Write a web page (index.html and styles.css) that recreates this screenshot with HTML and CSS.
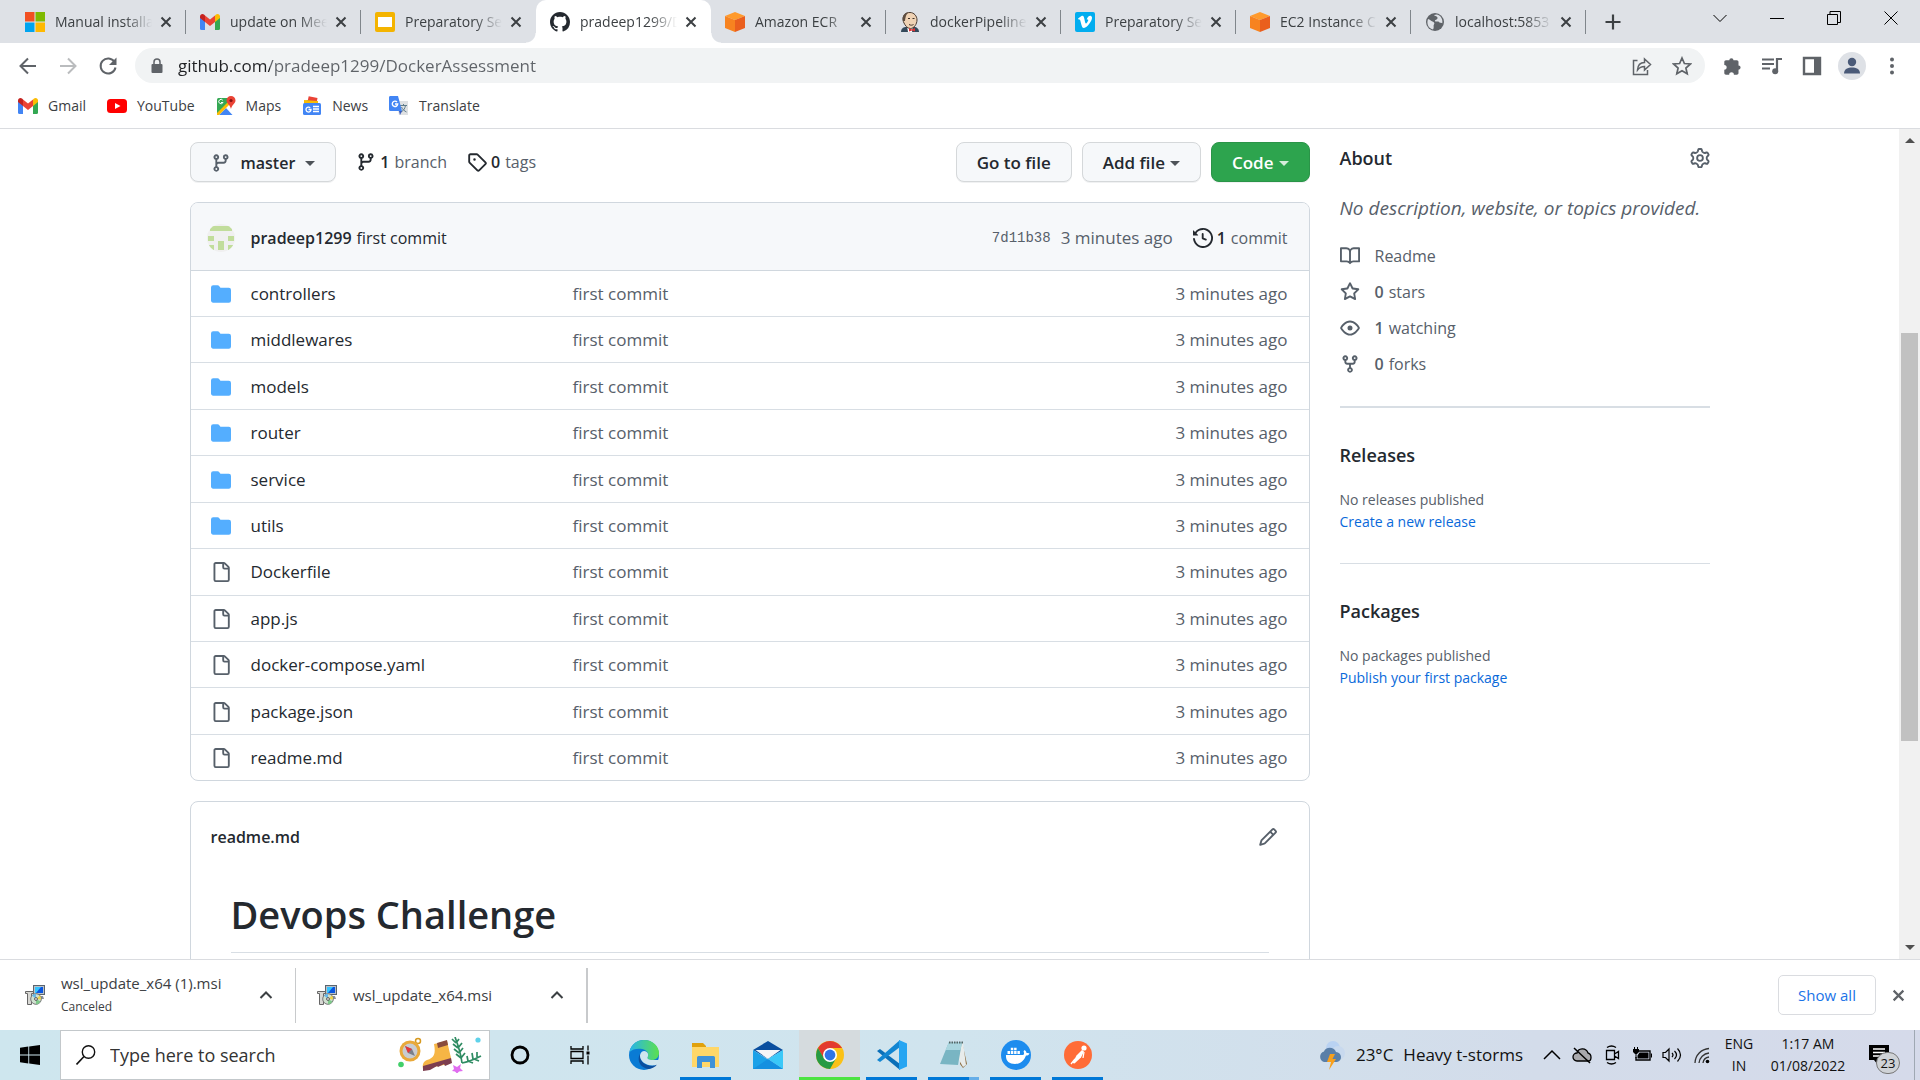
FILE: index.html
```html
<!DOCTYPE html>
<html lang="en">
<head>
<meta charset="utf-8">
<title>pradeep1299/DockerAssessment</title>
<link rel="stylesheet" href="styles.css">
</head>
<body>
<svg class="sprite" aria-hidden="true">
  <symbol id="close" viewBox="0 0 12 12"><path d="M1.5 1.5l9 9M10.5 1.5l-9 9" fill="none" stroke="currentColor" stroke-width="2"/></symbol>
  <symbol id="chev-up" viewBox="0 0 14 14"><path d="M1.500 10L7 4.500 12.500 10" fill="none" stroke="currentColor" stroke-width="2"/></symbol>
  <symbol id="gmail" viewBox="0 0 20 16"><path d="M0 2v12.500A1.500 1.500 0 001.500 16H5V6z" fill="#4285f4"/><path d="M15 6v10h3.500a1.500 1.500 0 001.500-1.500V2z" fill="#34a853"/><path d="M15 1.500V8l5-4V2.400C20 .4 17.600-.7 16 .6z" fill="#fbbc04"/><path d="M5 8V1.500l5 4 5-4V8l-5 4z" fill="#ea4335"/><path d="M0 2.400V4l5 4V1.500L4 .6C2.400-.7 0 .4 0 2.400z" fill="#c5221f"/></symbol>
  <symbol id="aws" viewBox="0 0 20 20"><path d="M10 0l10 4-10 4L0 4z" fill="#ff9a2c"/><path d="M0 4l10 4v12L0 16z" fill="#f78320"/><path d="M20 4L10 8v12l10-4z" fill="#ea5f1e"/></symbol>
  <symbol id="branch" viewBox="0 0 16 16"><path fill="currentColor" fill-rule="evenodd" d="M11.750 2.500a.75.75 0 100 1.500.75.75 0 000-1.500zm-2.250.75a2.250 2.250 0 113 2.122V6A2.500 2.500 0 0110 8.500H6a1 1 0 00-1 1v1.128a2.251 2.251 0 11-1.500 0V5.372a2.250 2.250 0 111.500 0v1.836A2.492 2.492 0 016 7h4a1 1 0 001-1v-.628A2.250 2.250 0 019.500 3.250zM4.250 12a.75.75 0 100 1.500.75.75 0 000-1.500zM3.500 3.250a.75.75 0 111.500 0 .75.75 0 01-1.500 0z"/></symbol>
  <symbol id="folder" viewBox="0 0 16 16"><path fill="currentColor" d="M1.750 1A1.750 1.750 0 000 2.750v10.500C0 14.216.784 15 1.750 15h12.500A1.750 1.750 0 0016 13.250v-8.500A1.750 1.750 0 0014.250 3h-6.500a.25.25 0 01-.2-.1l-.9-1.200c-.33-.44-.85-.7-1.400-.7h-3.500z"/></symbol>
  <symbol id="file" viewBox="0 0 16 16"><path fill="currentColor" fill-rule="evenodd" d="M2 1.750C2 .784 2.784 0 3.750 0h6.586c.464 0 .909.184 1.237.513l2.914 2.914c.329.328.513.773.513 1.237v9.586A1.750 1.750 0 0113.250 16h-9.500A1.750 1.750 0 012 14.250V1.750zm1.750-.25a.25.25 0 00-.25.25v12.500c0 .138.112.25.25.25h9.500a.25.25 0 00.25-.25V6h-2.750A1.750 1.750 0 019 4.250V1.500H3.750zm6.750.062V4.250c0 .138.112.25.25.25h2.688a.252.252 0 00-.011-.013l-2.914-2.914a.272.272 0 00-.013-.011z"/></symbol>
  <symbol id="msi" viewBox="0 0 20 20"><rect x="8.500" y=".5" width="11" height="9" fill="#b9c0c8" stroke="#5a646e"/><rect x="10" y="2" width="8" height="6" fill="#0a56e0"/><path d="M10 2h6l-5 6h-1z" fill="#35c4ff"/><path d="M7 11h11l1 3H7z" fill="#8b929b"/><path d="M.5 6.500h8v2h-2v11h-4v-11h-2z" fill="#d8d8d4" stroke="#666"/><circle cx="11" cy="14" r="5.300" fill="#cfe0cf" stroke="#777"/><path d="M11 14L7 10.500a5 5 0 014-1.700z" fill="#68b8e8"/><path d="M11 14l4.500 2.500a5 5 0 01-4.500 2.700z" fill="#7ec98a"/><path d="M11 14l4-3.500a5 5 0 011 4z" fill="#ecd34a"/><circle cx="11" cy="14" r="1.400" fill="#fff" stroke="#555"/></symbol>
</svg>

<header class="chrome">
  <div class="tabstrip">
    <div class="tab"><a href="#"><svg class="fav" viewBox="0 0 20 20"><path fill="#f25022" d="M0 0h9.500v9.500H0z"/><path fill="#7fba00" d="M10.500 0H20v9.500h-9.500z"/><path fill="#00a4ef" d="M0 10.500h9.500V20H0z"/><path fill="#ffb900" d="M10.500 10.500H20V20h-9.500z"/></svg><span>Manual installa</span></a><button aria-label="Close tab"><svg><use href="#close"/></svg></button></div>
    <div class="tab"><a href="#"><svg class="fav" viewBox="0 -2 20 20"><use href="#gmail" width="20" height="16"/></svg><span>update on Mee</span></a><button aria-label="Close tab"><svg><use href="#close"/></svg></button></div>
    <div class="tab plain"><a href="#"><svg class="fav" viewBox="0 0 20 20"><rect width="20" height="20" rx="2" fill="#f4b400"/><path fill="#fff" d="M3 5h14v10H3z"/></svg><span>Preparatory Se</span></a><button aria-label="Close tab"><svg><use href="#close"/></svg></button></div>
    <div class="tab active"><a href="#"><svg class="fav" viewBox="0 0 16 16"><path fill="#24292f" d="M8 0C3.580 0 0 3.580 0 8c0 3.540 2.290 6.530 5.470 7.590.4.070.55-.17.55-.38 0-.19-.01-.82-.01-1.490-2.010.37-2.530-.49-2.690-.94-.09-.23-.48-.94-.82-1.130-.28-.15-.68-.52-.01-.53.63-.01 1.080.58 1.230.82.72 1.210 1.870.87 2.330.66.070-.52.28-.87.51-1.070-1.780-.2-3.640-.89-3.640-3.950 0-.87.31-1.590.82-2.150-.08-.2-.36-1.020.08-2.120 0 0 .67-.21 2.200.82.64-.18 1.320-.27 2-.27s1.360.09 2 .27c1.530-1.040 2.200-.82 2.200-.82.44 1.100.16 1.920.08 2.120.51.56.82 1.270.82 2.150 0 3.070-1.870 3.750-3.650 3.950.29.25.54.73.54 1.480 0 1.070-.01 1.930-.01 2.200 0 .21.15.46.55.38A8.010 8.010 0 0016 8c0-4.420-3.580-8-8-8z"/></svg><span>pradeep1299/D</span></a><button aria-label="Close tab"><svg><use href="#close"/></svg></button></div>
    <div class="tab"><a href="#"><svg class="fav"><use href="#aws"/></svg><span>Amazon ECR</span></a><button aria-label="Close tab"><svg><use href="#close"/></svg></button></div>
    <div class="tab"><a href="#"><svg class="fav" viewBox="0 0 20 20"><path d="M1 20c0-4 3-5 5-5h8c3 0 5 2 5 5z" fill="#34495a"/><path d="M7 14h6l-1 6H8z" fill="#fff"/><path d="M3 7C3 3 6 .5 10 .5S17 4 17 8s-3 8.500-6.500 8.500S5 13 4 11s-1-3-1-4z" fill="#efd2b4" stroke="#4b3b30"/><path d="M3 9C1.500 3 6 0 9 .3 6 2 5.500 5 5 9z" fill="#5d4d40"/><path d="M8 6.500h2M12.500 6.500h2M9 12.500c2 1 3 .8 4.500 0" stroke="#3d3028" fill="none"/><path d="M9 16l3 1.500 3-1.500v3.500l-3-1-3 1z" fill="#d33"/></svg><span>dockerPipeline</span></a><button aria-label="Close tab"><svg><use href="#close"/></svg></button></div>
    <div class="tab"><a href="#"><svg class="fav" viewBox="0 0 20 20"><rect width="20" height="20" rx="2" fill="#02adef"/><path d="M3 6.500L6.500 4c2-.8 2.500 1 3 3.500.5 2.800.9 4 1.500 4s1.700-1.700 2.100-2.700c.4-1.200-.3-1.700-1.400-1.200C12.500 4.500 14.500 3.300 16 4c2 1 .8 4.300-1.200 7.100C12.500 14.400 10.500 16 9 16c-2 0-2.300-2-3.200-5.500C5.300 8.300 5 7 3.900 7.700z" fill="#fff"/></svg><span>Preparatory Se</span></a><button aria-label="Close tab"><svg><use href="#close"/></svg></button></div>
    <div class="tab"><a href="#"><svg class="fav"><use href="#aws"/></svg><span>EC2 Instance C</span></a><button aria-label="Close tab"><svg><use href="#close"/></svg></button></div>
    <div class="tab"><a href="#"><svg class="fav" viewBox="0 0 20 20"><circle cx="10" cy="10" r="9" fill="#5f6368"/><path d="M3 7c2 .5 3 2 4.500 2.500S10 11 9 12.500 9.500 15 8 17.500C4 16.500 2 13 2.500 9zM9 3c1 1.500 3.500 1 3.500 3S9.500 7.500 10 9s3-.5 4 1 3 .5 3.300 1.300C18 7 15.500 3 11.500 2.600z" fill="#dee1e6"/></svg><span>localhost:5853</span></a><button aria-label="Close tab"><svg><use href="#close"/></svg></button></div>
    <button class="newtab" aria-label="New tab"><svg viewBox="0 0 16 16"><path d="M8 .5v15M.5 8h15" stroke="currentColor" stroke-width="2.200"/></svg></button>
    <div class="winbtns">
      <button aria-label="Search tabs"><svg viewBox="0 0 16 16"><path d="M1.500 5L8 11.500 14.500 5" fill="none" stroke="currentColor"/></svg></button>
      <button aria-label="Minimize"><svg viewBox="0 0 16 16"><path d="M1 8.500h14" stroke="currentColor"/></svg></button>
      <button aria-label="Restore"><svg viewBox="0 0 16 16"><path d="M1.500 4.500h10v10h-10zM4 4V1.500h10.500v11H12" fill="none" stroke="currentColor"/></svg></button>
      <button aria-label="Close"><svg viewBox="0 0 16 16"><path d="M1.500 1.500l13 13M14.500 1.500l-13 13" stroke="currentColor"/></svg></button>
    </div>
  </div>

  <div class="toolbar">
    <button aria-label="Back"><svg viewBox="0 0 20 20"><path d="M18 10H3M10 2.500L2.500 10l7.500 7.500" fill="none" stroke="currentColor" stroke-width="2"/></svg></button>
    <button class="dim" aria-label="Forward"><svg viewBox="0 0 20 20"><path d="M2 10h15M10 2.500l7.500 7.500-7.500 7.500" fill="none" stroke="currentColor" stroke-width="2"/></svg></button>
    <button aria-label="Reload"><svg viewBox="0 0 20 20"><path d="M16.500 6A7.500 7.500 0 1017.500 11.500" fill="none" stroke="currentColor" stroke-width="2"/><path d="M18.500 1.500V9H11z" fill="currentColor"/></svg></button>
    <div class="omnibox">
      <svg class="lock" viewBox="0 0 12 16"><path d="M3 6V4a3 3 0 016 0v2" fill="none" stroke="currentColor" stroke-width="1.500"/><rect x=".5" y="6" width="11" height="9" rx="1" fill="currentColor"/></svg>
      <input type="text" aria-label="Address" value="github.com/pradeep1299/DockerAssessment">
      <button aria-label="Share"><svg viewBox="0 0 20 20"><path d="M5.500 4.500H1.500v14h14V14M5.500 14c.3-5 3-7.500 7-7.500V3l6 5.500-6 5.500v-3.500c-3 0-5 .8-7 3.500z" fill="none" stroke="currentColor" stroke-width="1.500"/></svg></button>
      <button aria-label="Bookmark"><svg viewBox="0 0 20 20"><path d="M10 2l2.400 5.500 6 .5-4.500 4 1.300 5.800L10 14.700l-5.200 3.100L6.100 12 1.600 8l6-.5z" fill="none" stroke="currentColor" stroke-width="1.700"/></svg></button>
    </div>
    <button aria-label="Extensions"><svg viewBox="0 0 20 20"><path fill="currentColor" d="M16.500 9.500V6c0-1-.7-1.700-1.700-1.700h-3.300a2.100 2.100 0 10-4.200 0H4C3 4.300 2.300 5 2.300 6v3c3.200 0 3.200 4.700 0 4.700V17c0 1 .7 1.700 1.700 1.700h3.200c0-3.200 4.700-3.200 4.700 0h2.900c1 0 1.700-.7 1.700-1.700v-3.300a2.100 2.100 0 100-4.200z"/></svg></button>
    <button aria-label="Media"><svg viewBox="0 0 20 20"><path d="M0 3.500h12M0 8h12M0 12.500h8" stroke="currentColor" stroke-width="2"/><path d="M15 15V3h5" fill="none" stroke="currentColor" stroke-width="2.200"/><circle cx="13.200" cy="15.300" r="3" fill="currentColor"/></svg></button>
    <button aria-label="Side panel"><svg viewBox="0 0 20 20"><path d="M2 2h16v16H2z" fill="none" stroke="currentColor" stroke-width="2.400"/><path d="M12 2h6v16h-6z" fill="currentColor"/></svg></button>
    <button class="avatar" aria-label="Profile"><svg viewBox="0 0 28 28"><circle cx="14" cy="14" r="14" fill="#dee1e6"/><circle cx="14" cy="10" r="4.200" fill="#4a5a78"/><path d="M6 21.500c0-4.500 4-6 8-6s8 1.500 8 6z" fill="#4a5a78"/></svg></button>
    <button aria-label="Menu"><svg viewBox="0 0 20 20"><g fill="currentColor"><circle cx="10" cy="3.500" r="2"/><circle cx="10" cy="10" r="2"/><circle cx="10" cy="16.500" r="2"/></g></svg></button>
  </div>

  <nav class="bookmarks">
    <a href="#"><svg viewBox="0 -2 20 20"><use href="#gmail" width="20" height="16"/></svg>Gmail</a>
    <a href="#"><svg viewBox="0 0 20 20"><rect y="3" width="20" height="14" rx="3.500" fill="red"/><path d="M8 7l5.500 3L8 13z" fill="#fff"/></svg>YouTube</a>
    <a href="#"><svg viewBox="0 0 20 20"><rect x="1" y="2" width="16" height="17" rx="1.500" fill="#34a853"/><path d="M1 19L14 6l3 3v10z" fill="#fff"/><path d="M3 19l7-7 6.500 7z" fill="#4285f4"/><path d="M1 17L14 4l2 2L3 19H1z" fill="#fbbc04"/><path d="M15 0a4.500 4.500 0 014.500 4.500c0 3-3.500 4-4.500 8.500-1-4.500-4.500-5.500-4.500-8.500A4.500 4.500 0 0115 0z" fill="#ea4335"/><circle cx="15" cy="4.500" r="1.600" fill="#811"/><path d="M6.800 4.300A2.200 2.200 0 107 6.500H5" fill="none" stroke="#fff"/></svg>Maps</a>
    <a href="#"><svg viewBox="0 0 20 20"><path d="M3 5l10-3 4 8H3z" fill="#34a853"/><path d="M6 1h9v6H6z" fill="#ea4335" transform="rotate(12 10 4)"/><path d="M2 4l14 1v6H2z" fill="#fbbc04"/><rect x="1" y="7" width="18" height="12" rx="1.500" fill="#4285f4"/><path d="M11 10.500h6M11 13h6M11 15.500h6M8.200 11.700A2.500 2.500 0 109 13.500H6.500" fill="none" stroke="#fff" stroke-width="1.300"/></svg>News</a>
    <a href="#"><svg viewBox="0 0 20 20"><path d="M7 5h12v14H10z" fill="#dfe1e3"/><path d="M11 9.500h7M14.500 8v1.500M12 16c3-1.500 4-4 4.500-6.500M12.500 11c1 2.500 3 4 5 5" fill="none" stroke="#607d8b"/><path d="M1 0h8l4 15H1.500A1.500 1.500 0 010 13.500V1.500A1.500 1.500 0 011 0z" fill="#4285f4"/><path d="M10 15h3l-2 4z" fill="#3a5bbc"/><path d="M8 6A2.700 2.700 0 108.700 8H6" fill="none" stroke="#fff" stroke-width="1.400"/></svg>Translate</a>
  </nav>
</header>

<div class="viewport">
  <div class="page">
    <main class="repo">
      <div class="actions">
        <button class="btn branch-btn"><svg class="ico"><use href="#branch"/></svg>master<i class="caret"></i></button>
        <a class="count" href="#"><svg class="ico"><use href="#branch"/></svg><b>1</b> branch</a>
        <a class="count" href="#"><svg class="ico" viewBox="0 0 16 16"><path fill="currentColor" fill-rule="evenodd" d="M2.500 7.775V2.750a.25.25 0 01.25-.25h5.025a.25.25 0 01.177.073l6.250 6.250a.25.25 0 010 .354l-5.025 5.025a.25.25 0 01-.354 0l-6.250-6.250a.25.25 0 01-.073-.177zm-1.500 0V2.750C1 1.784 1.784 1 2.750 1h5.025c.464 0 .91.184 1.238.513l6.250 6.250a1.750 1.750 0 010 2.474l-5.026 5.026a1.750 1.750 0 01-2.474 0l-6.250-6.250A1.750 1.750 0 011 7.775zM6 5a1 1 0 100 2 1 1 0 000-2z"/></svg><b>0</b> tags</a>
        <button class="btn push">Go to file</button>
        <button class="btn">Add file<i class="caret"></i></button>
        <button class="btn primary">Code<i class="caret"></i></button>
      </div>

      <section class="box">
        <div class="commit-bar">
          <svg class="identicon" viewBox="0 0 28 28"><clipPath id="round"><circle cx="14" cy="14" r="14"/></clipPath><g clip-path="url(#round)"><path fill="#f0f0f0" d="M0 0h28v28H0z"/><path fill="#c1dd9b" d="M3 2h22v5H3zM1 12h6v5H1zM21 12h6v5h-6zM11 17h6v9h-6zM1 21h6v6H1zM21 21h6v6h-6z"/></g></svg>
          <a class="author" href="#">pradeep1299</a> <a class="msg" href="#">first commit</a>
          <a class="hash" href="#">7d11b38</a>
          <span class="age">3 minutes ago</span>
          <a class="count commits" href="#"><svg class="ico" viewBox="0 0 16 16"><path fill="currentColor" fill-rule="evenodd" d="M1.643 3.143L.427 1.927A.25.25 0 000 2.104V5.750c0 .138.112.25.25.25h3.646a.25.25 0 00.177-.427L2.715 4.215a6.500 6.500 0 11-1.180 4.458.75.75 0 10-1.493.154 8.001 8.001 0 101.600-5.684zM7.750 4a.75.75 0 01.75.75v2.992l2.028.812a.75.75 0 01-.557 1.392l-2.500-1A.75.75 0 017 8.250v-3.500A.75.75 0 017.750 4z"/></svg><b>1</b> commit</a>
        </div>
        <table class="files">
          <tbody>
          <tr><td><svg class="ico dir"><use href="#folder"/></svg></td><td><a href="#">controllers</a></td><td>first commit</td><td>3 minutes ago</td></tr>
          <tr><td><svg class="ico dir"><use href="#folder"/></svg></td><td><a href="#">middlewares</a></td><td>first commit</td><td>3 minutes ago</td></tr>
          <tr><td><svg class="ico dir"><use href="#folder"/></svg></td><td><a href="#">models</a></td><td>first commit</td><td>3 minutes ago</td></tr>
          <tr><td><svg class="ico dir"><use href="#folder"/></svg></td><td><a href="#">router</a></td><td>first commit</td><td>3 minutes ago</td></tr>
          <tr><td><svg class="ico dir"><use href="#folder"/></svg></td><td><a href="#">service</a></td><td>first commit</td><td>3 minutes ago</td></tr>
          <tr><td><svg class="ico dir"><use href="#folder"/></svg></td><td><a href="#">utils</a></td><td>first commit</td><td>3 minutes ago</td></tr>
          <tr><td><svg class="ico"><use href="#file"/></svg></td><td><a href="#">Dockerfile</a></td><td>first commit</td><td>3 minutes ago</td></tr>
          <tr><td><svg class="ico"><use href="#file"/></svg></td><td><a href="#">app.js</a></td><td>first commit</td><td>3 minutes ago</td></tr>
          <tr><td><svg class="ico"><use href="#file"/></svg></td><td><a href="#">docker-compose.yaml</a></td><td>first commit</td><td>3 minutes ago</td></tr>
          <tr><td><svg class="ico"><use href="#file"/></svg></td><td><a href="#">package.json</a></td><td>first commit</td><td>3 minutes ago</td></tr>
          <tr><td><svg class="ico"><use href="#file"/></svg></td><td><a href="#">readme.md</a></td><td>first commit</td><td>3 minutes ago</td></tr>
          </tbody>
        </table>
      </section>

      <section class="box readme">
        <div class="readme-head"><a href="#">readme.md</a><button class="bare" aria-label="Edit"><svg class="ico" viewBox="0 0 16 16"><path fill="currentColor" fill-rule="evenodd" d="M11.013 1.427a1.750 1.750 0 012.474 0l1.086 1.086a1.750 1.750 0 010 2.474l-8.610 8.610c-.21.21-.47.364-.756.445l-3.251.93a.75.75 0 01-.927-.928l.929-3.250a1.750 1.750 0 01.445-.758l8.610-8.610zm1.414 1.060a.25.25 0 00-.354 0L10.811 3.750l1.439 1.440 1.263-1.263a.25.25 0 000-.354l-1.086-1.086zM11.189 6.250L9.750 4.810l-6.286 6.287a.25.25 0 00-.064.108l-.558 1.953 1.953-.558a.249.249 0 00.108-.064l6.286-6.286z"/></svg></button></div>
        <h1>Devops Challenge</h1>
      </section>
    </main>

    <aside class="side">
      <section>
        <h2>About <button class="bare" aria-label="Edit details"><svg class="ico" viewBox="0 0 16 16"><path fill="none" stroke="currentColor" stroke-width="1.500" d="M7.300.8h1.400c.3 0 .6.2.7.6l.3 1.200c.1.300.4.600.7.800.2.100.4.200.6.400.3.200.7.300 1 .2l1.200-.4c.3-.1.700 0 .9.300.3.400.5.800.7 1.200.1.300 0 .7-.2.9l-.9.900c-.2.200-.3.600-.3.900v.6c0 .300.1.600.3.900l.9.900c.2.200.3.600.2.900-.2.400-.4.800-.7 1.200-.2.300-.6.400-.9.300l-1.200-.4c-.3-.1-.7 0-1 .2-.2.200-.4.300-.6.400-.3.200-.6.500-.7.800l-.3 1.200c-.1.400-.4.600-.7.600H7.300c-.3 0-.6-.2-.7-.6l-.3-1.200c-.1-.3-.4-.6-.7-.8-.2-.1-.4-.2-.6-.4-.3-.2-.7-.3-1-.2l-1.200.4c-.3.1-.7 0-.9-.3-.3-.4-.5-.8-.7-1.200-.1-.3 0-.7.2-.9l.9-.9c.2-.3.3-.6.3-.9v-.6c0-.3-.1-.7-.3-.9l-.9-.9c-.2-.2-.3-.6-.2-.9.2-.4.4-.8.7-1.200.2-.3.6-.4.900-.3l1.200.4c.3.100.7 0 1-.2.2-.2.4-.3.6-.4.3-.2.6-.5.7-.8l.3-1.200c.1-.4.4-.6.700-.6z"/><circle cx="8" cy="8" r="2.300" fill="none" stroke="currentColor" stroke-width="1.500"/></svg></button></h2>
        <p class="desc">No description, website, or topics provided.</p>
        <ul>
          <li><a href="#"><svg class="ico" viewBox="0 0 16 16"><path fill="currentColor" fill-rule="evenodd" d="M0 1.750A.75.75 0 01.75 1h4.253c1.227 0 2.317.59 3 1.501A3.744 3.744 0 0111.006 1h4.245a.75.75 0 01.75.75v10.500a.75.75 0 01-.75.75h-4.507a2.250 2.250 0 00-1.591.659l-.622.621a.75.75 0 01-1.060 0l-.622-.621A2.250 2.250 0 005.258 13H.75a.75.75 0 01-.75-.75V1.750zm8.755 3a2.250 2.250 0 012.250-2.250H14.500v9h-3.757c-.71 0-1.400.201-1.992.572l.004-7.322zm-1.504 7.324l.004-5.073-.002-2.253A2.250 2.250 0 005.003 2.500H1.500v9h3.757a3.750 3.750 0 011.994.574z"/></svg>Readme</a></li>
          <li><a href="#"><svg class="ico" viewBox="0 0 16 16"><path fill="currentColor" fill-rule="evenodd" d="M8 .25a.75.75 0 01.673.418l1.882 3.815 4.210.612a.75.75 0 01.416 1.279l-3.046 2.970.719 4.192a.75.75 0 01-1.088.791L8 12.347l-3.766 1.980a.75.75 0 01-1.088-.79l.72-4.194L.818 6.374a.75.75 0 01.416-1.280l4.210-.611L7.327.668A.75.75 0 018 .25zm0 2.445L6.615 5.500a.75.75 0 01-.564.41l-3.097.45 2.240 2.184a.75.75 0 01.216.664l-.528 3.084 2.769-1.456a.75.75 0 01.698 0l2.770 1.456-.53-3.084a.75.75 0 01.216-.664l2.240-2.183-3.096-.45a.75.75 0 01-.564-.41L8 2.694z"/></svg><b>0</b> stars</a></li>
          <li><a href="#"><svg class="ico" viewBox="0 0 16 16"><path fill="currentColor" fill-rule="evenodd" d="M1.679 7.932c.412-.621 1.242-1.750 2.366-2.717C5.175 4.242 6.527 3.500 8 3.500c1.473 0 2.824.742 3.955 1.715 1.124.967 1.954 2.096 2.366 2.717a.119.119 0 010 .136c-.412.621-1.242 1.750-2.366 2.717C10.825 11.758 9.473 12.500 8 12.500c-1.473 0-2.824-.742-3.955-1.715C2.920 9.818 2.090 8.690 1.679 8.068a.119.119 0 010-.136zM8 2c-1.981 0-3.670.992-4.933 2.078C1.797 5.169.88 6.423.43 7.100a1.619 1.619 0 000 1.798c.45.678 1.367 1.932 2.637 3.024C4.329 13.008 6.019 14 8 14c1.981 0 3.670-.992 4.933-2.078 1.270-1.091 2.187-2.345 2.637-3.023a1.619 1.619 0 000-1.798c-.45-.678-1.367-1.932-2.637-3.023C11.671 2.992 9.981 2 8 2zm0 8a2 2 0 100-4 2 2 0 000 4z"/></svg><b>1</b> watching</a></li>
          <li><a href="#"><svg class="ico" viewBox="0 0 16 16"><path fill="currentColor" fill-rule="evenodd" d="M5 3.250a.75.75 0 11-1.500 0 .75.75 0 011.500 0zm0 2.122a2.250 2.250 0 10-1.500 0v.878A2.250 2.250 0 005.750 8.500h1.500v2.128a2.251 2.251 0 101.500 0V8.500h1.500a2.250 2.250 0 002.250-2.250v-.878a2.250 2.250 0 10-1.500 0v.878a.75.75 0 01-.75.75h-4.500A.75.75 0 015 6.250v-.878zm3.750 7.378a.75.75 0 11-1.500 0 .75.75 0 011.500 0zm3-8.750a.75.75 0 100-1.500.75.75 0 000 1.500z"/></svg><b>0</b> forks</a></li>
        </ul>
      </section>
      <section class="more releases">
        <h2>Releases</h2>
        <p>No releases published</p>
        <a href="#">Create a new release</a>
      </section>
      <section class="more">
        <h2>Packages</h2>
        <p>No packages published</p>
        <a href="#">Publish your first package</a>
      </section>
    </aside>
  </div>
  <div class="scrollbar" aria-hidden="true">
    <i class="arrow up"></i><div class="track"><div class="thumb"></div></div><i class="arrow down"></i>
  </div>
</div>

<section class="downloads">
  <div class="dl"><svg class="fav"><use href="#msi"/></svg><div class="name">wsl_update_x64 (1).msi<small>Canceled</small></div><button class="bare" aria-label="More"><svg><use href="#chev-up"/></svg></button></div>
  <div class="dl last"><svg class="fav"><use href="#msi"/></svg><div class="name">wsl_update_x64.msi</div><button class="bare" aria-label="More"><svg><use href="#chev-up"/></svg></button></div>
  <button class="showall">Show all</button>
  <button class="bare dismiss" aria-label="Close downloads"><svg><use href="#close"/></svg></button>
</section>

<footer class="taskbar">
  <button class="start" aria-label="Start"><svg viewBox="0 0 20 20"><path d="M0 2.800l8.300-1.200v7.900H0zM9.200 1.500L20 0v9.500H9.200zM0 10.500h8.300v7.900L0 17.200zM9.200 10.500H20V20L9.200 18.500z"/></svg></button>
  <label class="search"><svg viewBox="0 0 20 20"><circle cx="12.500" cy="7" r="6.200" fill="none" stroke="#111" stroke-width="1.400"/><path d="M8 11.500L.5 19.500" stroke="#111" stroke-width="1.600"/></svg>
    <input type="text" aria-label="Search" placeholder="Type here to search">
    <svg class="doodle" viewBox="0 0 85 36"><circle cx="20" cy="4" r="2.500" fill="none" stroke="#d79a20" stroke-width="1.500"/><circle cx="12" cy="14" r="10.500" fill="#e9a93a"/><circle cx="12" cy="14" r="7.500" fill="#c9ccd0"/><path d="M7 9l7 3 3 7-7-3z" fill="#7a7f8a"/><path d="M7 9l7 3-4 4z" fill="#e3343a"/><circle cx="3" cy="27.500" r="2.800" fill="#41cf6a"/><path d="M36 7l13-3 4 17c.5 3 0 5-2 6l-26 5c-1-5 1-8 4-9 7-2 9-6 7-16z" fill="#f6b545"/><path d="M39 6l10-3 1 5-10 3z" fill="#8a4b3c"/><path d="M25 29l28-8 1 5-7 3-1-2-6 3-1-1-7 4-7 1z" fill="#7d3e4f"/><path d="M57 0c3 8 6 17 7 26M58 6l-4-4M58 6l3-4M60 11l-5-4M60 11l4-5M61 16l-5-4M61 16l4-5M63 21l-5-4M63 21l4-5M64 26c7-1 13-4 19-7M70 24l-1-5M75 22l-1-6M79 20v-5M70 24l5 2M76 22l5 2" fill="none" stroke="#2f8c63" stroke-width="1.700"/><circle cx="80" cy="3" r="2.600" fill="#5fd2ea"/><path d="M55 28l4 2 4-3-1 4 3 3-4 .5-2 2-2-2-3-.5 2-2z" fill="#e06cf0"/></svg></label>
  <button aria-label="Cortana"><svg viewBox="0 0 20 20"><circle cx="10" cy="10" r="8" fill="none" stroke="#000" stroke-width="2.800"/></svg></button>
  <button aria-label="Task view"><svg viewBox="0 0 20 20"><path d="M1 1v3h12V1M1 19v-3h12v3M1 6.500h12v7H1zM18 .5v5M18 10.500v9" fill="none" stroke="#000" stroke-width="1.300"/><path d="M16.500 6.500h3v3h-3z"/></svg></button>
  <div class="apps">
    <button aria-label="Edge"><svg viewBox="0 0 32 32"><defs><linearGradient id="eg" x1="0" x2="1"><stop offset="0" stop-color="#28b4ea"/><stop offset="1" stop-color="#5ce04e"/></linearGradient></defs><circle cx="16" cy="16" r="15" fill="#0a7bd4"/><path d="M1.500 13C3 5 9 1 16 1c9 0 15 6.500 15 13 0 4.500-3.500 7-7 7-3 0-5.500-1-4.500-2.500 1.500-2 1-7-5-8.500-5-1-10 0-13 3z" fill="url(#eg)"/><path d="M12 15c-3 5-1 12 6 14.500 4 1.500 9-1 11-4-4 2-9 1.500-12-.5-4-2.500-5-6-5-10z" fill="#0c4f9e"/><path d="M16 12c4 0 5 4 3.500 6.500C19 20 21.500 21 24 21h5l2 0c-1 3-2 4-3 5-8 2-16-3-16-9 0-2 1.500-5 4-5z" fill="#d0e6ee"/></svg></button>
    <button class="open" aria-label="File Explorer"><svg viewBox="0 0 32 32"><path d="M2 4h11l3 3v4H2z" fill="#e0a10c"/><path d="M2 8h27v20H2z" fill="#ffd768"/><path d="M7 29V18.500A1.500 1.500 0 018.500 17h15a1.500 1.500 0 011.500 1.500V29h-5v-6h-8v6z" fill="#3f92d8"/></svg></button>
    <button aria-label="Mail"><svg viewBox="0 0 32 32"><path d="M1 11L16 2l15 9-15 9z" fill="#0a4f9f"/><path d="M3.500 11h25L16 20z" fill="#f4f5f7"/><path d="M1 11l30 19H1z" fill="#1ba1e8"/><path d="M31 11v19L16 20z" fill="#3ac8f8"/><path d="M1 30l15-10 15 10z" fill="#1590e0"/></svg></button>
    <button class="open current" aria-label="Chrome"><svg viewBox="0 0 32 32"><circle cx="16" cy="16" r="14" fill="#fbc116"/><path d="M3.900 9A14 14 0 0128.100 9H16l-6 11z" fill="#e33b2e"/><path d="M3.900 9A14 14 0 0016 30l6-10.500-12 0z" fill="#269a43"/><circle cx="16" cy="16" r="7" fill="#fff"/><circle cx="16" cy="16" r="5.400" fill="#2f74e8"/></svg></button>
    <button class="open" aria-label="VS Code"><svg viewBox="0 0 32 32"><path d="M1 12l3-2 20 15v6z" fill="#0a6fb8"/><path d="M1 21l3 2L24 8V1z" fill="#1286d2"/><path d="M23 1l8 3.500v23L23 31z" fill="#26a5f2"/></svg></button>
    <button class="open multi" aria-label="Notepad"><svg viewBox="0 0 32 32"><path d="M24 3l5 22-4 4-3-4z" fill="#8b6b3e"/><path d="M11 3h14l3 23-3 2z" fill="#e8eceb"/><path d="M11 3h13l-4 23-18-1z" fill="#79b5c3"/><path d="M11 3h13l-1.500 8L7.500 11z" fill="#a9d6df"/><path d="M11 3.500h15" stroke="#566" stroke-width="2" stroke-dasharray="1.500 1"/></svg></button>
    <button class="open" aria-label="Docker"><svg viewBox="0 0 32 32"><circle cx="16" cy="16" r="15" fill="#1d8cee"/><path d="M6 16h17c1 0 1.500-2 .5-3.500l1-1.500c1.500 1 2 2 2 3 1 0 2 0 3 .5-.7 1.700-2 2-3.500 2C24 22 20 25 15 25c-6 0-9.500-3-9-9z" fill="#fff"/><path d="M7.500 12h2.500v3H7.500zM10.800 12h2.500v3h-2.500zM14.100 12h2.500v3h-2.500zM17.400 12h2.500v3h-2.500zM10.800 8.800h2.500v2.500h-2.500zM14.100 8.800h2.500v2.500h-2.500z" fill="#fff"/></svg></button>
    <button class="open" aria-label="Postman"><svg viewBox="0 0 32 32"><circle cx="16" cy="16" r="14" fill="#ff6c37"/><circle cx="22" cy="9" r="2.600" fill="#fff"/><path d="M20 11l2 1.500-3 6-6.500 6-2-.5 4-7.500z" fill="#fff"/><path d="M9 25l4-5M22 13l-1 6" stroke="#fff" stroke-width="1.300"/></svg></button>
  </div>
  <button class="weather"><svg viewBox="0 0 28 30"><circle cx="15" cy="8" r="7" fill="#b9d2f2"/><circle cx="20" cy="13" r="7" fill="#c8d9ee"/><path d="M6 22a5.500 5.500 0 010-10.500C7 7 16 6 18 12c6 0 7 9 1 10z" fill="#5a7fa8"/><path d="M12 14h5l-2.500 5H18l-7 11 2-8H9z" fill="#f8a01c"/></svg><span>23°C</span><span>Heavy t-storms</span></button>
  <div class="tray">
    <button aria-label="Hidden icons"><svg viewBox="0 0 20 20"><path d="M2 14l8-8 8 8" fill="none" stroke="#000" stroke-width="1.500"/></svg></button>
    <button aria-label="OneDrive"><svg viewBox="0 0 20 20"><path d="M5 16a4 4 0 010-8c1-5 9-6 11 0 4 1 4 8 0 8z" fill="#a9a9ad" stroke="#000" stroke-width="1.300"/><path d="M2 3l16 15" stroke="#000" stroke-width="1.500"/></svg></button>
    <button aria-label="Camera"><svg viewBox="0 0 20 20"><path d="M4.500 5.500h8v9h-8zM12.500 9l4-2.500v7l-4-2.500M5 2.500c3-2 6-2 9 0M5 17.500c3 2 6 2 9 0" fill="none" stroke="#000" stroke-width="1.300"/></svg></button>
    <button aria-label="Battery"><svg viewBox="0 0 20 20"><path d="M6 6h12v9H4v-3" fill="none" stroke="#000" stroke-width="1.400"/><path d="M7.500 7.500h9v6h-11v-3zM19 8.500h1v4h-1zM1 4h6v3L5 9H3L1 7zM2 2h1v2H2zM5 2h1v2H5zM3.500 9h1v4h-1z"/></svg></button>
    <button aria-label="Volume"><svg viewBox="0 0 20 20"><path d="M1 7.500h2.500L7 4v12l-3.500-3.500H1zM10 8q2 2 0 4M12.500 6q4 4 0 8M15.500 3.500q6 6.500 0 13" fill="none" stroke="#000" stroke-width="1.200"/></svg></button>
    <button aria-label="Wi-Fi"><svg viewBox="0 0 20 20"><path d="M3 18A15 15 0 0117 3.500M7 18A11 11 0 0117 8M11 18a7 7 0 016-6" fill="none" stroke="#333" stroke-width="1.300"/><circle cx="15.500" cy="16.500" r="1.800"/></svg></button>
  </div>
  <button class="lang">ENG<br>IN</button>
  <button class="clock">1:17 AM<br>01/08/2022</button>
  <button class="notes" aria-label="Notifications"><svg viewBox="0 0 20 20"><path d="M0 0h20v15H9v5l-4-5H0z"/><path d="M4 4h12M4 7.500h12M4 11h9" stroke="#fff" stroke-width="1.300"/></svg><span class="badge">23</span></button>
</footer>
</body>
</html>
```
FILE: styles.css
```css
* { box-sizing: border-box; }
body {
  margin: 0;
  height: 100vh;
  display: flex;
  flex-direction: column;
  overflow: hidden;
  background: #fff;
  color: #24292f;
  font: 16px/24px "Open Sans", "Noto Sans", sans-serif;
}
button, input { font: inherit; color: inherit; }
button { background: none; border: 0; padding: 0; display: flex; align-items: center; justify-content: center; }
a { color: inherit; text-decoration: none; }
h1, h2, p, ul { margin: 0; padding: 0; }
h1, h2, b { font-weight: 600; }
ul { list-style: none; }
svg { display: block; flex: none; }
.sprite { position: absolute; width: 0; height: 0; }
.ico, .fav { width: 20px; height: 20px; }

/* Browser frame */
.chrome { border-bottom: 1px solid #dadce0; color: #3c4043; }
.tabstrip { display: flex; height: 43px; padding-left: 11px; background: #dee1e6; }
.tab { position: relative; display: flex; flex: 0 1 175px; min-width: 0; align-items: center; padding: 0 14px; font-size: 14px; }
.tab::after { content: ""; position: absolute; right: 0; top: 10px; width: 1px; height: 24px; background: #80868b; }
.tab.plain::after { display: none; }
.tab.active { background: #fff; border-radius: 10px 10px 0 0; }
.tab.active::before, .tab.active::after { content: ""; position: absolute; top: auto; bottom: 0; width: 10px; height: 10px; }
.tab.active::before { left: -10px; background: radial-gradient(circle at 0 0, transparent 9px, #fff 10px); }
.tab.active::after { right: -10px; background: radial-gradient(circle at 100% 0, transparent 9px, #fff 10px); }
.tab a { display: flex; flex: 1; min-width: 0; align-items: center; gap: 10px; }
.tab span { flex: 1; overflow: hidden; white-space: nowrap; -webkit-mask-image: linear-gradient(90deg, #000 72%, transparent); mask-image: linear-gradient(90deg, #000 72%, transparent); }
.tab button { width: 20px; height: 20px; margin-left: 4px; margin-right: -4px; }
.tab button svg { width: 12px; height: 12px; }
.newtab { width: 54px; }
.newtab svg { width: 16px; height: 16px; }
.winbtns { display: flex; height: 36px; margin-left: auto; padding-right: 1px; color: #000; }
.winbtns button { width: 57px; }
.winbtns svg { width: 16px; height: 16px; }

.toolbar { display: flex; align-items: center; height: 45px; padding: 0 8px; color: #5f6368; }
.toolbar > button { width: 40px; height: 40px; }
.toolbar > button svg { width: 20px; height: 20px; }
.toolbar > .avatar svg { width: 28px; height: 28px; }
.toolbar > .dim { color: #babcbe; }
.omnibox { display: flex; flex: 1; align-items: center; height: 35px; margin: 0 7px; padding: 0 3px 0 16px; border-radius: 18px; background: #f1f3f4; }
.lock { width: 12px; height: 16px; }
.omnibox input {
  flex: 1; margin-left: 15px; padding: 0; border: 0; outline: 0; font-size: 17px; color: transparent;
  background: linear-gradient(90deg, #202124 92px, #5f6368 92px);
  -webkit-background-clip: text; background-clip: text;
}
.omnibox button { width: 40px; }
.omnibox button svg { width: 20px; height: 20px; }

.bookmarks { display: flex; gap: 21px; height: 40px; padding: 0 0 4px 18px; align-items: center; font-size: 14px; }
.bookmarks a { display: flex; align-items: center; gap: 10px; }
.bookmarks svg { width: 20px; height: 20px; }

/* Repository page */
.viewport { display: flex; flex: 1; min-height: 0; overflow: hidden; }
.page { display: flex; flex: 1; gap: 30px; max-width: 1520px; margin: 0 auto; padding-top: 13px; align-items: flex-start; }
.repo { flex: 1; min-width: 0; }
.side { width: 370px; }
.actions { display: flex; align-items: center; gap: 10px; margin-bottom: 20px; }
.btn { height: 40px; padding: 2px 20px 0; border: 1px solid #d5d8da; border-radius: 8px; background: #f6f8fa; font-size: 17px; font-weight: 600; white-space: nowrap; box-shadow: 0 1px 0 #f0f1f2; }
.btn.branch-btn { font-size: 16px; }
.btn.primary { background: #2da44e; border-color: #2a9448; color: #fff; }
.btn .ico { margin-right: 10px; color: #57606a; }
.caret { margin-left: 5px; border: 5px solid transparent; border-top-color: currentColor; border-bottom: 0; opacity: .8; }
.branch-btn .caret { margin-left: 10px; }
.push { margin-left: auto; }
.count { display: flex; align-items: center; color: #57606a; margin-left: 10px; }
.count .ico, .count b { color: #24292f; }
.count b { margin: 0 5px 0 4px; }

.box { border: 1px solid #d0d7de; border-radius: 8px; margin-bottom: 20px; overflow: hidden; }
.commit-bar { display: flex; align-items: center; height: 68px; padding: 2px 21px 0 16px; background: #f6f8fa; border-bottom: 1px solid #d0d7de; }
.identicon { width: 28px; height: 28px; }
.author { margin: 0 5px 0 16px; font-weight: 600; }
.hash { margin: 0 10px 0 auto; color: #57606a; font: 14px/20px "Liberation Mono", monospace; }
.age { color: #57606a; font-size: 17px; }
.commits { margin-left: 20px; }

.files { width: 100%; height: 509px; border-collapse: collapse; table-layout: fixed; font-size: 17px; }
.files td { padding: 1px 0 0; border-top: 1px solid #d8dee4; color: #57606a; }
.files tr:first-child td { border-top: 0; }
.files td:first-child { width: 60px; padding-left: 20px; }
.files td:nth-child(2) { width: 322px; color: #24292f; }
.files td:last-child { text-align: right; padding-right: 21px; }
.files .ico { color: #57606a; }
.files .dir { color: #54aeff; }

.readme { padding: 0 20px 40px; }
.readme-head { display: flex; align-items: center; justify-content: space-between; height: 70px; padding-right: 11px; font-weight: 600; }
.readme-head .ico { color: #57606a; }
.readme h1 { margin: 14px 20px 0; padding-bottom: 10px; border-bottom: 1px solid #d8dee4; font-size: 38px; line-height: 56px; }

.side h2 { display: flex; justify-content: space-between; align-items: center; font-size: 18px; line-height: 32px; }
.side .ico { color: #57606a; }
.desc { margin: 20px 0 22px; font-size: 19px; line-height: 28px; font-style: italic; color: #57606a; white-space: nowrap; }
.side li { margin-top: 12px; color: #57606a; }
.side li a { display: flex; align-items: center; }
.side li .ico { margin-right: 15px; }
.side li b { margin-right: 5px; }
.more { margin-top: 30px; padding-top: 31px; border-top: 1px solid #d8dee4; font-size: 14px; line-height: 22px; }
.more.releases { border-top-width: 2px; }
.more p { margin-top: 18px; color: #57606a; }
.more a { color: #0969da; }

.scrollbar { display: flex; flex-direction: column; align-items: center; width: 21px; background: #f1f1f1; }
.track { flex: 1; align-self: stretch; padding: 0 2px; }
.thumb { height: 52%; margin-top: 181px; background: #c1c1c1; }
.arrow { margin: 9px 0; border: 5px solid transparent; }
.arrow.up { border-top: 0; border-bottom-color: #505050; }
.arrow.down { border-bottom: 0; border-top-color: #505050; }

/* Downloads shelf */
.downloads { display: flex; align-items: center; height: 71px; border-top: 1px solid #dadce0; color: #3c4043; }
.dl { display: flex; align-items: center; width: 296px; height: 55px; padding: 0 22px 0 25px; border-right: 1px solid #c8cacc; font-size: 15px; line-height: 24px; }
.dl.last { width: 292px; padding-left: 21px; border-right-width: 2px; }
.dl .name { flex: 1; margin-left: 16px; }
.dl small { display: block; font-size: 12px; }
.dl button svg { width: 14px; height: 14px; }
.showall { width: 98px; height: 40px; margin-left: auto; border: 1px solid #dadce0; border-radius: 5px; color: #1a73e8; font-size: 15px; }
.dismiss { width: 44px; height: 40px; color: #5f6368; }
.dismiss svg { width: 13px; height: 13px; }

/* Taskbar */
.taskbar { display: flex; height: 50px; background: linear-gradient(90deg, #cee6ee, #d0e4ee 50%, #d3dcea 80%, #d5daea); color: #111; }
.taskbar > button { flex: none; width: 60px; }
.taskbar svg { width: 20px; height: 20px; }
.search { display: flex; align-items: center; width: 430px; padding: 0 6px 0 15px; border: 1px solid #c3c8cb; background: #fff; }
.search input { flex: 1; min-width: 0; margin-left: 14px; padding: 0; border: 0; outline: 0; background: none; font-size: 18px; }
.search input::placeholder { color: #333; opacity: 1; }
.taskbar .doodle { width: 85px; height: 36px; }
.apps { display: flex; gap: 1px; padding-left: 3px; }
.apps button { position: relative; width: 61px; }
.taskbar .apps svg { width: 32px; height: 32px; }
.apps .open::after { content: ""; position: absolute; left: 5px; right: 5px; bottom: 0; height: 3px; background: #0078d7; }
.apps .current { background: #d5dbde; }
.apps .current::after { left: 0; right: 0; background: #4de340; }
.apps .multi::after { background: linear-gradient(90deg, #0078d7 80%, #66aee8 80%); }
.taskbar > .weather { width: auto; margin-left: auto; gap: 10px; font-size: 17px; }
.taskbar .weather svg { width: 28px; height: 30px; }
.tray { display: flex; margin-left: 14px; }
.tray button { width: 30px; }
.taskbar > .lang, .taskbar > .clock { width: 44px; font-size: 14px; line-height: 22px; display: block; white-space: nowrap; }
.taskbar > .clock { width: 94px; }
.taskbar > .notes { position: relative; width: 60px; margin-right: 5px; padding-right: 12px; border-right: 1px solid #9fa8b3; }
.badge { position: absolute; left: 21px; top: 22px; width: 24px; height: 22px; border: 1px solid #777; border-radius: 12px; background: #cfd2d6; font-size: 13px; line-height: 20px; }
```
